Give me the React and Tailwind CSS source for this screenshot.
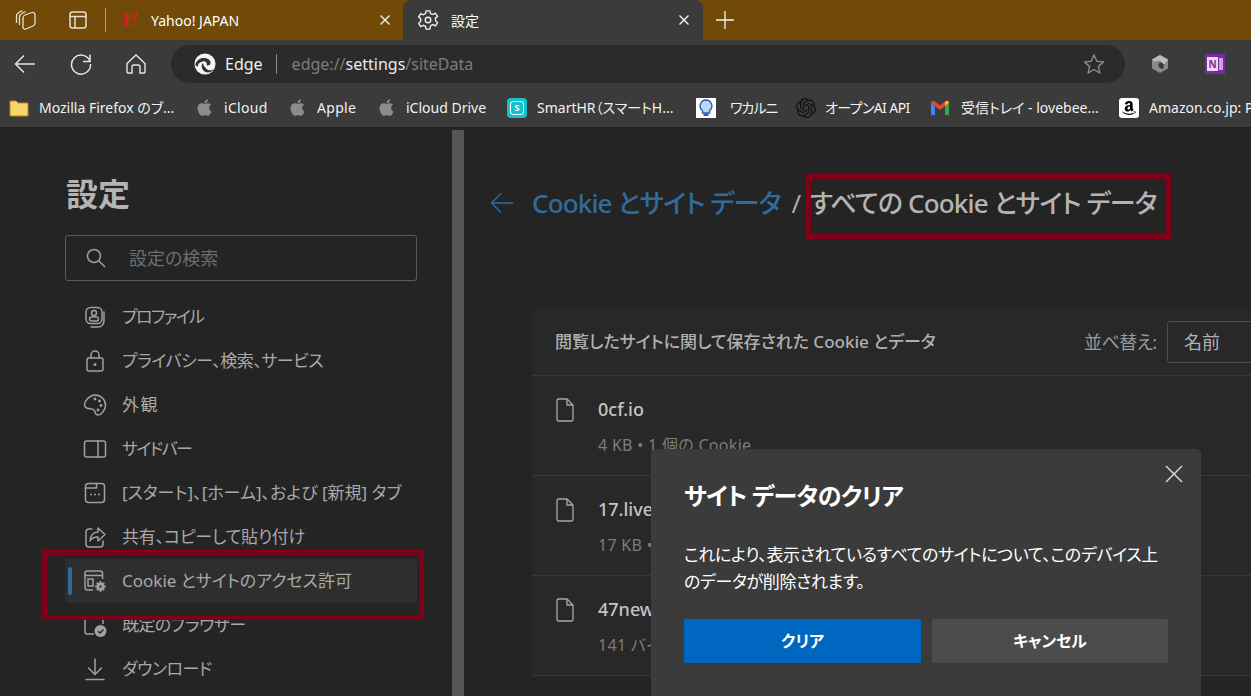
import React from "react";
import { FaApple, FaAmazon } from "react-icons/fa";
import { SiOpenai } from "react-icons/si";

const font = { fontFamily: '"Noto Sans","Noto Sans CJK JP",sans-serif' };

function S({ size = 24, className = "", children, vb = 24, sw = 1.5 }) {
  return (
    <svg width={size} height={size} viewBox={`0 0 ${vb} ${vb}`} fill="none" stroke="currentColor" strokeWidth={sw} strokeLinecap="round" strokeLinejoin="round" className={className}>
      {children}
    </svg>
  );
}

const navIcons = {
  profile: <S><rect x="3" y="2.500" width="16" height="16" rx="4.500" /><path d="M21 7v9a6 6 0 0 1-6 6H8" /><circle cx="11" cy="8" r="2.500" /><rect x="6.500" y="12" width="9" height="4" rx="2" /></S>,
  lock: <S><rect x="4" y="9" width="16" height="13" rx="2" /><path d="M8 9V6a4 4 0 0 1 8 0v3" /><circle cx="12" cy="15.500" r="0.8" fill="currentColor" /></S>,
  palette: <S><path d="M12 2c6 0 10.500 4.500 10.500 10S18 22 15 22c-3 0-2.500-3-4-5s-4-1-6-1.500S1.500 13 1.500 11 6 2 12 2z" /><circle cx="12" cy="6" r=".7" fill="currentColor" /><circle cx="16.500" cy="8" r=".7" fill="currentColor" /><circle cx="18" cy="12.500" r=".7" fill="currentColor" /><circle cx="15" cy="17" r=".7" fill="currentColor" /></S>,
  sidebar: <S><rect x="1.500" y="4" width="21" height="16" rx="2" /><path d="M15 4v16" /></S>,
  tab: <S><rect x="2.500" y="2.500" width="19" height="19" rx="3" /><path d="M2.500 7h11V2.500" /><path d="M8 13.500h.01M12 13.500h.01M16 13.500h.01" strokeWidth="2" /></S>,
  share: <S><path d="M9 4H6a3 3 0 0 0-3 3v12a3 3 0 0 0 3 3h11a3 3 0 0 0 3-3v-3" /><path d="M15 3l7 6.500-7 6.500v-4c-4 0-6.500 1-8 4 0-5 3-9 8-9z" /></S>,
};

function CookieNavIcon() {
  return (
    <svg width="24" height="24" viewBox="0 0 24 24" fill="none" stroke="currentColor" strokeWidth="1.500">
      <path d="M10 21H4a2.500 2.500 0 0 1-2-2.500V4.500A2.500 2.500 0 0 1 4 2h13a2.500 2.500 0 0 1 2.500 2.500V10" />
      <path d="M2 6.500h17.500" />
      <rect x="5" y="10" width="5" height="7" />
      <circle cx="17.500" cy="17.500" r="3" strokeWidth="2.500" />
      <path d="M17.500 12v11M12 17.500h11M13.700 13.700l7.600 7.600M21.300 13.700l-7.600 7.600" strokeWidth="1.500" />
      <circle cx="17.500" cy="17.500" r="1.200" fill="#2e2e2e" stroke="none" />
    </svg>
  );
}

function BrowserIcon() {
  return (
    <svg width="24" height="24" viewBox="0 0 24 24" fill="none" stroke="currentColor" strokeWidth="1.500">
      <path d="M11 21H4a2 2 0 0 1-2-2V5a2 2 0 0 1 2-2h14a2 2 0 0 1 2 2v6" />
      <circle cx="17.500" cy="18" r="6" fill="currentColor" stroke="none" />
      <path d="M15 18l2 2 3.500-3.500" stroke="#242424" strokeWidth="1.300" />
    </svg>
  );
}

const nav = [
  [navIcons.profile, "プロファイル", "tracking-[-1.6px]"],
  [navIcons.lock, "プライバシー、検索、サービス", "tracking-[-0.5px]"],
  [navIcons.palette, "外観", "tracking-[1.5px]"],
  [navIcons.sidebar, "サイドバー", "tracking-[-1.6px]"],
  [navIcons.tab, "[スタート]、[ホーム]、および [新規] タブ", "tracking-[0px]"],
  [navIcons.share, "共有、コピーして貼り付け", "tracking-[-0.2px]"],
  [<CookieNavIcon />, "Cookie とサイトのアクセス許可", "tracking-[0px]", true],
  [<BrowserIcon />, "既定のブラウザー", "tracking-[-0.6px]"],
  [<S><path d="M12 2v15M5.500 11l6.500 6.500 6.500-6.500M3 22.500h18" /></S>, "ダウンロード", "tracking-[-0.5px]"],
];

function EdgeLogo() {
  return (
    <svg width="22" height="22" viewBox="0 0 24 24">
      <circle cx="12" cy="12" r="11.500" fill="#f5f5f5" />
      <path d="M1.500 12.500C3 7 8 5 12 5.500c4 .5 6.500 3 6 6-.3 1.500-2 2.200-4 2.200 .6-3-1.500-5-4.500-4.500C6 9.800 4 12 4 15c-1.500-.5-2.300-1.500-2.500-2.500z" fill="#333" />
      <path d="M9.500 11c-2 2-1.500 7 2.500 9.500 3 1.500 7 .5 9.500-2.500-3 1.500-7 1-8.500-1.500-1.800-1.500-3-3.500-3.500-5.500z" fill="#333" />
    </svg>
  );
}

function Bookmark({ w, icon, label, gap = 10, labelClass = "" }) {
  return (
    <div className="flex items-center shrink-0" style={{ width: w }}>
      <span className="flex items-center justify-center w-5 h-5 shrink-0" style={{ marginRight: gap }}>{icon}</span>
      <span className={`text-[14px] text-[#f2f2f2] whitespace-nowrap ${labelClass}`}>{label}</span>
    </div>
  );
}

const appleIcon = <FaApple size={19} className="text-[#8c8c8c]" />;

function Row({ name, sub }) {
  return (
    <div className="h-[100px] border-b border-[#383838] flex items-start pl-[23px] pt-[20px]">
      <svg width="20" height="24" viewBox="0 0 20 24" fill="none" stroke="#a8a8a8" strokeWidth="1.300" className="mt-[2px] mr-[23px]">
        <path d="M2 2.500A1.500 1.500 0 0 1 3.500 1H12l6 6v14.500a1.500 1.500 0 0 1-1.500 1.500h-13A1.500 1.500 0 0 1 2 21.500z" />
        <path d="M12 1v6h6" />
      </svg>
      <div>
        <div className="text-[18px] leading-[26px] font-medium text-[#c4c4c4]">{name}</div>
        <div className="text-[16px] leading-[20px] mt-[13px] tracking-[0.3px] text-[#7c7c7c]">{sub}</div>
      </div>
    </div>
  );
}

export default function App() {
  return (
    <div className="relative w-[1251px] h-[696px] overflow-hidden bg-[#242424] flex flex-col [font-feature-settings:'palt']" style={font}>
      {/* tab strip */}
      <div className="h-[40px] bg-[#704a06] flex items-stretch text-white shrink-0">
        <div className="w-[52px] flex items-center justify-center">
          <svg width="22" height="22" viewBox="0 0 22 22" fill="none" stroke="#e8e0d2" strokeWidth="1.300"><path d="M1.500 14V7c0-2 1-3 3-4l3-1.500" /><path d="M4.500 16V8c0-2 1-3 3-4l3-1.500" /><path d="M8 9c0-1.500.8-2.500 2-3l7-2.500c1.500-.5 3 .5 3 2V14c0 1.500-.8 2.500-2 3l-7 3c-1.500.5-3-.5-3-2z" /></svg>
        </div>
        <div className="w-[52px] flex items-center justify-center">
          <svg width="20" height="20" viewBox="0 0 20 20" fill="none" stroke="#e8e0d2" strokeWidth="1.500"><rect x="2" y="2" width="16" height="16" rx="2.500" /><path d="M2 6.500h16M7 6.500V18" /></svg>
        </div>
        <div className="w-px my-[8px] bg-[#b79c6b] ml-px" />
        <div className="w-[297px] flex items-center pl-[14px] pr-[12px]">
          <span className="w-[31px] text-[#e8112d] font-bold italic text-[19px] tracking-[-1px]" style={{ fontFamily: '"Liberation Serif",serif' }}>Y!</span>
          <span className="text-[14px] flex-1">Yahoo! JAPAN</span>
          <svg width="12" height="12" viewBox="0 0 12 12" stroke="#f5f5f5" strokeWidth="1.400"><path d="M1.500 1.500l9 9M10.500 1.500l-9 9" /></svg>
        </div>
        <div className="w-[300px] bg-[#3b3b3b] rounded-t-[8px] flex items-center pl-[14px] pr-[13px]">
          <svg width="22" height="22" viewBox="0 0 24 24" fill="none" stroke="#f0f0f0" strokeWidth="1.500" className="mr-[12px]"><circle cx="12" cy="12" r="3" /><path d="M10 2h4l.7 3 2.500 1 2.700-1.500 2.500 3.500-2.300 2 .1 2.800 2.200 2-2.200 3.500-2.800-1.300-2.500 1.200L14 22h-4l-.7-3-2.500-1.200-2.800 1.300L1.800 15.600l2.200-2V10.800L1.800 8.500l2.300-3.500L6.800 6.300 9.300 5z" /></svg>
          <span className="text-[14px] flex-1">設定</span>
          <svg width="12" height="12" viewBox="0 0 12 12" stroke="#f5f5f5" strokeWidth="1.400"><path d="M1.500 1.500l9 9M10.500 1.500l-9 9" /></svg>
        </div>
        <div className="flex items-center pl-[13px]">
          <svg width="18" height="18" viewBox="0 0 18 18" stroke="#f5f5f5" strokeWidth="1.300"><path d="M9 0v18M0 9h18" /></svg>
        </div>
      </div>

      {/* toolbar */}
      <div className="h-[48px] bg-[#3b3b3b] flex items-center text-[#e6e6e6] shrink-0">
        <div className="w-[50px] flex justify-center">
          <svg width="22" height="20" viewBox="0 0 22 20" fill="none" stroke="currentColor" strokeWidth="1.500"><path d="M21 10H1.500M10 1.500L1.500 10l8.500 8.500" /></svg>
        </div>
        <div className="w-[62px] flex justify-center">
          <svg width="22" height="22" viewBox="0 0 22 22" fill="none" stroke="currentColor" strokeWidth="1.500"><path d="M20 8.500A9.500 9.500 0 1 0 20.500 11" /><path d="M20 1.500v7h-7" /></svg>
        </div>
        <div className="w-[48px] flex justify-center">
          <svg width="20" height="20" viewBox="0 0 20 20" fill="none" stroke="currentColor" strokeWidth="1.400"><path d="M1 9.500L10 1l9 8.500V18a1 1 0 0 1-1 1h-4v-6.500a1.500 1.500 0 0 0-1.500-1.500h-5A1.500 1.500 0 0 0 6 12.500V19H2a1 1 0 0 1-1-1z" /></svg>
        </div>
        <div className="ml-[11px] w-[954px] h-[38px] rounded-full bg-[#2b2b2b] flex items-center pl-[23px] pr-[20px]">
          <EdgeLogo />
          <span className="ml-[9px] text-[16px] text-[#f0f0f0]">Edge</span>
          <span className="ml-[13px] w-px h-[20px] bg-[#8a8a8a]" />
          <span className="ml-[15px] text-[16px] text-[#7d7d7d] flex-1">edge://<span className="text-[#e8e8e8]">settings</span>/siteData</span>
          <svg width="22" height="22" viewBox="0 0 24 24" fill="none" stroke="#8a8a8a" strokeWidth="1.500" strokeLinejoin="round"><path d="M12 2l3 7 7.500.7-5.700 4.900 1.700 7.400L12 18l-6.500 4 1.700-7.400L1.500 9.700 9 9z" /></svg>
        </div>
        <div className="ml-[25px] w-[20px]">
          <svg width="20" height="20" viewBox="0 0 20 20"><path d="M10 1l8 4.500v9L10 19l-8-4.500v-9z" fill="#8a8a8a" /><path d="M10 1l8 4.500-4 5-4-4-5 1-3-2z" fill="#bdbdbd" /><path d="M10 8l4 2.500-1 5L10 14l-2-3z" fill="#3b3b3b" /></svg>
        </div>
        <div className="ml-[35px] w-[20px] h-[20px] bg-[#7b2aa6] flex items-center relative">
          <span className="absolute left-[2px] top-[3px] w-[11px] h-[14px] bg-[#e8d9f0] text-[#7b2aa6] text-[10px] leading-[14px] font-bold text-center">N</span>
          <span className="absolute right-[2px] top-[4px] w-[4px] h-[12px] bg-[#c9a5dc]" />
        </div>
      </div>

      {/* bookmarks */}
      <div className="h-[39px] bg-[#3b3b3b] flex items-center pl-[9px] shrink-0 overflow-hidden">
        <Bookmark w={185} icon={<svg width="20" height="18" viewBox="0 0 20 18"><path d="M1 3a1 1 0 0 1 1-1h5l2 2h9a1 1 0 0 1 1 1v11a1 1 0 0 1-1 1H2a1 1 0 0 1-1-1z" fill="#f9d46b" stroke="#b98a1e" /></svg>} label="Mozilla Firefox のブ..." />
        <Bookmark w={93} icon={appleIcon} labelClass="tracking-[0.3px]" label="iCloud" />
        <Bookmark w={89} icon={appleIcon} label="Apple" labelClass="tracking-[0.3px]" />
        <Bookmark w={131} icon={appleIcon} label="iCloud Drive" />
        <Bookmark w={189} icon={<span className="w-5 h-5 rounded-[4px] bg-[#12c2cc] flex items-center justify-center"><span className="w-[14px] h-[14px] rounded-[3px] border border-white text-white text-[9px] leading-[12px] text-center font-bold">S</span></span>} label="SmartHR（スマートH..." />
        <Bookmark w={100} gap={14} labelClass="tracking-[-1px]" icon={<span className="w-5 h-5 bg-white flex items-center justify-center"><svg width="14" height="18" viewBox="0 0 14 18"><path d="M7 1a6 6 0 0 1 3.500 10.800V14h-7v-2.200A6 6 0 0 1 7 1z" fill="#bcd8f2" stroke="#2d5fb0" strokeWidth="1.400" /><rect x="4.500" y="14.500" width="5" height="2.500" fill="#2d5fb0" /></svg></span>} label="ワカルニ" />
        <Bookmark w={134} gap={9} labelClass="tracking-[-0.6px]" icon={<SiOpenai size={20} className="text-[#111]" />} label="オープンAI API" />
        <Bookmark w={189} gap={11} icon={<svg width="20" height="16" viewBox="0 0 20 16"><path d="M1 15V3l4 3v9z" fill="#4285f4" /><path d="M15 15V6l4-3v12z" fill="#34a853" /><path d="M1 3c0-2 2-3 4-1.500L10 5.500l5-4C17 0 19 1 19 3l-4 3-5 4-5-4z" fill="#ea4335" /><path d="M15 1.500C17 0 19 1 19 3l-4 3z" fill="#fbbc04" /></svg>} label="受信トレイ - lovebee..." />
        <Bookmark w={140} icon={<span className="w-5 h-5 rounded-[3px] bg-white flex items-center justify-center"><FaAmazon size={16} className="text-black" /></span>} label="Amazon.co.jp: P" />
      </div>

      {/* content */}
      <div className="flex-1 flex min-h-0 text-[#a8a8a8]">
        <aside className="w-[452px] shrink-0 pl-[65px] pr-[35px]">
          <h1 className="mt-[47px] pl-[1px] text-[32px] leading-[40px] font-semibold text-[#b4b4b4]">設定</h1>
          <div className="mt-[21px] h-[46px] border border-[#5a5a5a] rounded-[3px] flex items-center pl-[20px]">
            <svg width="20" height="20" viewBox="0 0 20 20" fill="none" stroke="#a0a0a0" strokeWidth="1.500"><circle cx="8" cy="8" r="6.500" /><path d="M13 13l6 6" /></svg>
            <span className="ml-[23px] text-[18px] text-[#6e6e6e]">設定の検索</span>
          </div>
          <nav className="mt-[14px]">
            {nav.map(([icon, label, tracking, active], i) => (
              <div key={i} className={`relative h-[44px] flex items-center pl-[18px] rounded-[3px] ${active ? "bg-[#2e2e2e]" : ""}`}>
                {active && <span className="absolute left-[3px] top-[8px] w-[4px] h-[28px] rounded-full bg-[#2f6b9e]" />}
                <span className="w-[24px] h-[24px] mr-[15px] text-[#a0a0a0]">{icon}</span>
                <span className={`text-[17px] whitespace-nowrap ${tracking}`}>{label}</span>
              </div>
            ))}
          </nav>
        </aside>
        <div className="w-[12px] shrink-0 mt-[3px] bg-[#555555]" />
        <main className="flex-1 min-w-0 overflow-hidden pl-[26px]">
          <div className="mt-[54px] h-[44px] flex items-center text-[26px] tracking-[-0.85px]">
            <svg width="24" height="22" viewBox="0 0 24 22" fill="none" stroke="#2f6b9e" strokeWidth="1.400" className="mr-[18px]"><path d="M23 11H1.500M11 1.500L1.500 11l9.500 9.500" /></svg>
            <span className="text-[#2f6b9e] font-medium whitespace-nowrap">Cookie とサイト データ</span>
            <span className="ml-[11px] mr-[9px]">/</span>
            <span className="text-[#b4b4b4] font-medium whitespace-nowrap">すべての Cookie とサイト データ</span>
          </div>
          <section className="mt-[84px] ml-[42px] w-[900px] rounded-t-[4px] bg-[#282828]">
            <div className="h-[67px] border-b border-[#383838] flex items-center pl-[23px]">
              <span className="text-[17px] font-medium text-[#b0b0b0] w-[529px] whitespace-nowrap">閲覧したサイトに関して保存された Cookie とデータ</span>
              <span className="text-[18px] tracking-[-0.6px] text-[#9a9a9a] w-[83px] whitespace-nowrap">並べ替え:</span>
              <span className="w-[140px] h-[42px] border border-[#4c4c4c] rounded-[3px] pl-[16px] text-[18px] leading-[40px] text-[#b0b0b0]">名前</span>
            </div>
            <Row name="0cf.io" sub="4 KB • 1 個の Cookie" />
            <Row name="17.live" sub="17 KB • 1 個の Cookie" />
            <Row name="47news.jp" sub="141 バイト • 1 個の Cookie" />
          </section>
        </main>
      </div>

      {/* annotations */}
      <div className="absolute left-[42px] top-[550px] w-[382px] h-[70px] border-[5px] border-[#7f0019]" />
      <div className="absolute left-[806px] top-[174px] w-[365px] h-[65px] border-[5px] border-[#7f0019]" />

      {/* dialog */}
      <div className="absolute left-[651px] top-[449px] w-[550px] h-[260px] rounded-[5px] bg-[#3b3b3b] px-[33px] pt-[29px] text-white">
        <button className="absolute right-[18px] top-[16px]">
          <svg width="18" height="18" viewBox="0 0 18 18" stroke="#e0e0e0" strokeWidth="1.400"><path d="M1 1l16 16M17 1L1 17" /></svg>
        </button>
        <h2 className="text-[24px] leading-[36px] font-bold tracking-[-0.7px]">サイト データのクリア</h2>
        <p className="mt-[27px] text-[17px] leading-[27px] tracking-[-0.35px]">これにより、表示されているすべてのサイトについて、このデバイス上<br />のデータが削除されます。</p>
        <div className="mt-[24px] flex gap-[11px]">
          <button className="w-[237px] h-[44px] rounded-[2px] bg-[#0067c0] text-[16px] font-semibold">クリア</button>
          <button className="w-[236px] h-[44px] rounded-[2px] bg-[#4c4c4c] text-[16px] font-semibold">キャンセル</button>
        </div>
      </div>
    </div>
  );
}
